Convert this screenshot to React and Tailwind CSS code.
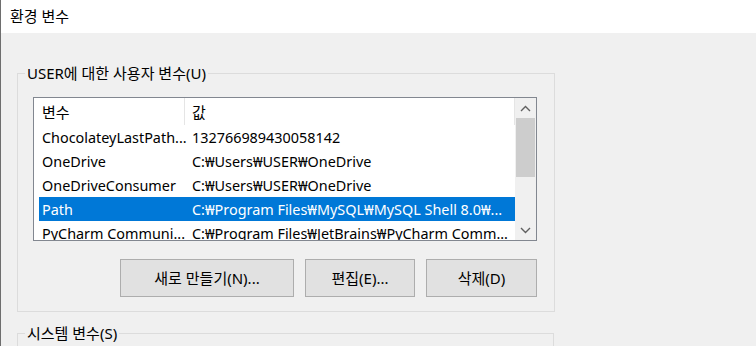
import React from 'react';

const rows = [
  { name: 'ChocolateyLastPath...', value: '132766989430058142' },
  { name: 'OneDrive', value: 'C:₩Users₩USER₩OneDrive' },
  { name: 'OneDriveConsumer', value: 'C:₩Users₩USER₩OneDrive' },
  { name: 'Path', value: 'C:₩Program Files₩MySQL₩MySQL Shell 8.0₩...', selected: true },
  { name: 'PyCharm Communi...', value: 'C:₩Program Files₩JetBrains₩PyCharm Comm...' },
];

const Chevron = ({ up }) => (
  <svg width="11" height="7" viewBox="0 0 11 7">
    <path
      d={up ? 'M1 6 L5.5 1.5 L10 6' : 'M1 1 L5.5 5.5 L10 1'}
      fill="none"
      stroke="#606060"
      strokeWidth="1.4"
    />
  </svg>
);

const WinButton = ({ width, children }) => (
  <button
    className={`${width} h-[38px] bg-[#e1e1e1] border border-[#adadad] text-[15px] text-black`}
  >
    {children}
  </button>
);

export default function App() {
  return (
    <div className="w-[756px] h-[346px] overflow-hidden bg-[#f0f0f0] border-l border-[#6e6e6e] text-black font-['Noto_Sans','Noto_Sans_CJK_KR',sans-serif]">
      {/* Title bar */}
      <div className="h-[33px] bg-white pl-[9px] flex items-center text-[15px]">환경 변수</div>

      <div className="pl-[16px] pt-[30px]">
        {/* User variables */}
        <fieldset className="w-[537px] border border-[#dcdcdc] pl-[15px] pr-[17px] pt-[14px] pb-[14px]">
          <legend className="ml-[-8px] px-[2px] text-[15px] leading-[20px]">USER에 대한 사용자 변수(U)</legend>

          <div className="w-[504px] h-[144px] border border-[#828790] bg-white flex">
            <div className="flex-1 pl-[5px] overflow-hidden text-[14.4px]">
              <div className="h-[27px] flex items-center text-[15px]">
                <div className="w-[146px] h-full pl-[3px] pt-[2px] border-r border-[#e5e5e5] flex items-center">변수</div>
                <div className="flex-1 h-full pl-[7px] pt-[2px] border-r border-[#e5e5e5] flex items-center">값</div>
              </div>
              {rows.map((r) => (
                <div
                  key={r.name}
                  className={`h-[24px] pt-[1px] flex items-center whitespace-nowrap ${r.selected ? 'bg-[#0078d7] text-white' : ''}`}
                >
                  <div className="w-[146px] shrink-0 pl-[3px]">{r.name}</div>
                  <div className="flex-1 pl-[7px] overflow-hidden">{r.value}</div>
                </div>
              ))}
            </div>
            {/* Scrollbar */}
            <div className="w-[21px] bg-[#f0f0f0] flex flex-col">
              <div className="h-[20px] flex items-center justify-center">
                <Chevron up />
              </div>
              <div className="h-[59px] mx-[1px] bg-[#cdcdcd]" />
              <div className="flex-1" />
              <div className="h-[20px] flex items-center justify-center">
                <Chevron />
              </div>
            </div>
          </div>

          <div className="mt-[18px] flex justify-end gap-[11px]">
            <WinButton width="w-[174px]">새로 만들기(N)...</WinButton>
            <WinButton width="w-[110px]">편집(E)...</WinButton>
            <WinButton width="w-[111px]">삭제(D)</WinButton>
          </div>
        </fieldset>

        {/* System variables */}
        <fieldset className="mt-[11px] w-[537px] h-[60px] border border-[#dcdcdc] px-[15px]">
          <legend className="ml-[-8px] px-[2px] text-[15px] leading-[20px]">시스템 변수(S)</legend>
        </fieldset>
      </div>
    </div>
  );
}
